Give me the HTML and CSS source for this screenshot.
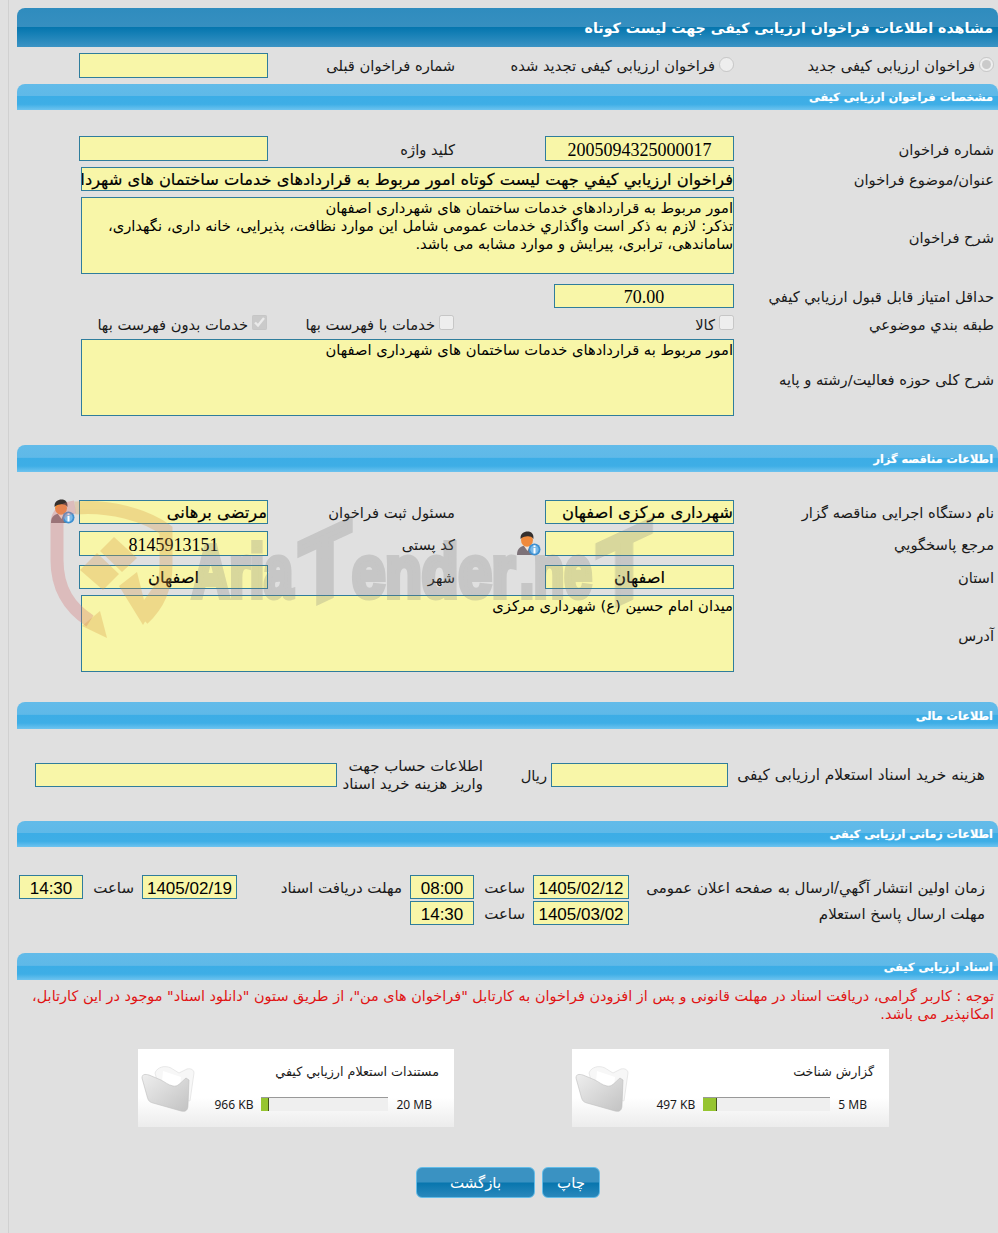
FILE: index.html
```html
<!DOCTYPE html>
<html lang="fa" dir="rtl">
<head>
<meta charset="utf-8">
<title>مشاهده اطلاعات فراخوان</title>
<link rel="stylesheet" href="styles.css">
</head>
<body>
<svg class="watermark" viewBox="0 0 998 700" aria-hidden="true">
  <path class="wm-pink" d="M75 507 C62 509 57 514 57 524 L57 560 C57 590 70 608 90 621"/>
  <g class="wm-orange-group">
    <polygon class="wm-orange" points="107,638 82,626 100,611"/>
    <path class="wm-orange-line" d="M75 508 C110 505 145 515 166 530 L166 565 C166 590 155 608 143 619"/>
    <polygon class="wm-orange" points="80,570 97,553 119,574 103,590"/>
    <polygon class="wm-orange" points="100,551 114,537 137,558 122,572"/>
    <polygon class="wm-orange" points="119,586 137,572 144,600 160,578 160,596 143,625"/>
  </g>
  <g class="wm-text-group">
    <text class="wm-text" x="192" y="597" font-size="74" textLength="101" lengthAdjust="spacingAndGlyphs" direction="ltr">Aria</text>
    <text class="wm-text" transform="translate(325 599) skewY(-25)" x="-26" y="0" font-size="98" textLength="52" lengthAdjust="spacingAndGlyphs" direction="ltr">T</text>
    <text class="wm-text" x="352" y="597" font-size="74" textLength="163" lengthAdjust="spacingAndGlyphs" direction="ltr">ender</text>
    <text class="wm-text" x="520" y="597" font-size="74" textLength="72" lengthAdjust="spacingAndGlyphs" direction="ltr">.ne</text>
    <text class="wm-text" transform="translate(624 601) skewY(-25)" x="-27" y="0" font-size="98" textLength="54" lengthAdjust="spacingAndGlyphs" direction="ltr">T</text>
  </g>
</svg>

<div class="page">
  <h1 class="bar bar-dark">مشاهده اطلاعات فراخوان ارزیابی کیفی جهت لیست کوتاه</h1>

  <div class="row h25 mt6">
    <label class="lab"><input type="radio" name="k" checked disabled>فراخوان ارزیابی کیفی جدید</label>
    <div class="radio-two">
      <label class="lab radio-cell"><input type="radio" name="k" disabled>فراخوان ارزیابی کیفی تجدید شده</label>
      <span class="lab radio-end">شماره فراخوان قبلی</span>
    </div>
    <div class="field"></div>
  </div>

  <h2 class="bar bar-light h26 mt6">مشخصات فراخوان ارزیابی کیفی</h2>

  <div class="row low h25 mt26">
    <span class="lab">شماره فراخوان</span>
    <div class="field center num">2005094325000017</div>
    <span class="lab lab-mid">کلید واژه</span>
    <div class="field"></div>
  </div>
  <div class="row h24 mt6">
    <span class="lab">عنوان/موضوع فراخوان</span>
    <div class="field wide strong nowrap">فراخوان ارزيابي كيفي جهت ليست كوتاه امور مربوط به قراردادهای خدمات ساختمان های شهرداری اصفهان</div>
  </div>
  <div class="row h77 mt6">
    <span class="lab">شرح فراخوان</span>
    <div class="field wide area">امور مربوط به قراردادهای خدمات ساختمان های شهرداری اصفهان<br>تذکر: لازم به ذکر است واگذاري خدمات عمومی شامل این موارد نظافت، پذیرایی، خانه داری، نگهداری،<br>ساماندهی، ترابری، پیرایش و موارد مشابه می باشد.</div>
  </div>
  <div class="row h24 mt10">
    <span class="lab">حداقل امتیاز قابل قبول ارزیابي کیفي</span>
    <div class="field center num score">70.00</div>
  </div>
  <div class="row h20 mt7">
    <span class="lab">طبقه بندي موضوعي</span>
    <div class="checks">
      <label class="lab check-a"><input type="checkbox" disabled>کالا</label>
      <label class="lab check-b"><input type="checkbox" disabled>خدمات با فهرست بها</label>
      <label class="lab"><input type="checkbox" checked disabled>خدمات بدون فهرست بها</label>
    </div>
  </div>
  <div class="row h77 mt4">
    <span class="lab">شرح کلی حوزه فعالیت/رشته و پایه</span>
    <div class="field wide area">امور مربوط به قراردادهای خدمات ساختمان های شهرداری اصفهان</div>
  </div>

  <h2 class="bar bar-light h27 mt29">اطلاعات مناقصه گزار</h2>

  <div class="row h24 mt28">
    <span class="lab">نام دستگاه اجرایی مناقصه گزار</span>
    <div class="field strong nowrap">شهرداری مرکزی اصفهان</div>
    <span class="lab lab-mid">مسئول ثبت فراخوان</span>
    <div class="field strong nowrap">مرتضی برهانی</div>
    <svg class="person person-end" viewBox="0 0 25 25" aria-hidden="true"><use href="#person"/></svg>
  </div>
  <div class="row low h25 mt7">
    <span class="lab">مرجع پاسخگويي</span>
    <div class="field"></div>
    <div class="mid-icon">
      <svg class="person" viewBox="0 0 25 25" aria-hidden="true"><use href="#person"/></svg>
      <span class="lab">کد پستی</span>
    </div>
    <div class="field center num">8145913151</div>
  </div>
  <div class="row h24 mt9">
    <span class="lab">استان</span>
    <div class="field center strong">اصفهان</div>
    <span class="lab lab-mid">شهر</span>
    <div class="field center strong">اصفهان</div>
  </div>
  <div class="row h77 mt6">
    <span class="lab">آدرس</span>
    <div class="field wide area">میدان امام حسین (ع) شهرداری مرکزی</div>
  </div>

  <h2 class="bar bar-light h27 mt30">اطلاعات مالی</h2>

  <div class="fin mt28">
    <span class="lab">هزینه خرید اسناد استعلام ارزیابی کیفی</span>
    <div class="field"></div>
    <span class="lab">ریال</span>
    <span class="lab fin-two">اطلاعات حساب جهت<br>واریز هزینه خرید اسناد</span>
    <div class="field"></div>
  </div>

  <h2 class="bar bar-light h26 mt28">اطلاعات زمانی ارزیابی کیفی</h2>

  <div class="times mt28">
    <span class="lab">زمان اولین انتشار آگهي/ارسال به صفحه اعلان عمومی</span>
    <div class="field center sans">1405/02/12</div>
    <span class="lab">ساعت</span>
    <div class="field center sans">08:00</div>
    <span class="lab">مهلت دریافت اسناد</span>
    <div class="field center sans">1405/02/19</div>
    <span class="lab">ساعت</span>
    <div class="field center sans">14:30</div>
  </div>
  <div class="times mt2">
    <span class="lab">مهلت ارسال پاسخ استعلام</span>
    <div class="field center sans">1405/03/02</div>
    <span class="lab">ساعت</span>
    <div class="field center sans">14:30</div>
  </div>

  <h2 class="bar bar-light h27 mt28">اسناد ارزیابی کیفی</h2>

  <p class="note">توجه : کاربر گرامی، دریافت اسناد در مهلت قانونی و پس از افزودن فراخوان به کارتابل "فراخوان های من"، از طریق ستون "دانلود اسناد" موجود در این کارتابل،<br>امکانپذیر می باشد.</p>

  <div class="cards">
    <div class="card">
      <svg class="folder" viewBox="0 0 54 48" aria-hidden="true"><use href="#folder"/></svg>
      <div class="card-title">گزارش شناخت</div>
      <div class="card-meter">
        <span>5 MB</span>
        <div class="meter"><i class="fill" style="width:14px"></i></div>
        <span>497 KB</span>
      </div>
    </div>
    <div class="card">
      <svg class="folder" viewBox="0 0 54 48" aria-hidden="true"><use href="#folder"/></svg>
      <div class="card-title">مستندات استعلام ارزيابي کيفي</div>
      <div class="card-meter">
        <span>20 MB</span>
        <div class="meter"><i class="fill" style="width:8px"></i></div>
        <span>966 KB</span>
      </div>
    </div>
  </div>

  <div class="buttons">
    <button class="btn btn-print" type="button">چاپ</button>
    <button class="btn btn-back" type="button">بازگشت</button>
  </div>
</div>

<svg class="defs" aria-hidden="true">
  <defs>
    <linearGradient id="fb" x1="0" y1="0" x2="1" y2="1"><stop offset="0" stop-color="#eeeeee"/><stop offset="1" stop-color="#c2c2c2"/></linearGradient>
    <symbol id="person" viewBox="0 0 25 25">
      <path d="M1 24 C1 17 5 14.500 11 14.500 C17 14.500 20 18 20 24 Z" fill="#7d7278"/>
      <path d="M8 15 L14 15 L11.500 20 Z" fill="#f3e6dc"/>
      <ellipse cx="11" cy="9" rx="6" ry="6.800" fill="#f08a3c"/>
      <path d="M4.600 8 C4 2.500 8 0.500 11.500 0.500 C15.500 0.500 18 3 17.400 8 C16 5.500 13 5 10 5.500 C7.500 5.800 6 6.500 4.600 8 Z" fill="#35302e"/>
      <circle cx="18.500" cy="18.500" r="6" fill="#3d8fd0"/>
      <circle cx="18.500" cy="18.500" r="4.200" fill="#7ab9e8"/>
      <rect x="17.500" y="17" width="2" height="5.500" fill="#fff"/>
      <rect x="17.500" y="14.300" width="2" height="1.800" fill="#fff"/>
    </symbol>
    <symbol id="folder" viewBox="0 0 54 48">
      <path d="M14 8 C16 2 24 0 30 3 L38 8 L46 4 C50 3 53 5 53 8 L49 36 L20 30 Z" fill="#f7f7f7" stroke="#dcdcdc" stroke-width=".6"/>
      <path d="M22 6 L40 12 L38 32 L20 28 Z" fill="#ffffff"/>
      <path d="M1 13 C1 9 4 9 8 10 L20 15 C24 17 27 20 32 21 C37 22 39 18 45 13 L48 15 L47 40 C47 46 44 47 40 46 L12 38 C8 37 7 35 6 31 Z" fill="url(#fb)" stroke="#bdbdbd" stroke-width=".6"/>
    </symbol>
  </defs>
</svg>
</body>
</html>
```

FILE: styles.css
```css
* { box-sizing: border-box; }
html, body { margin: 0; padding: 0; }
body {
  background: #e0e0e0;
  color: #1a1a1a;
  font-family: "DejaVu Sans", sans-serif;
  font-size: 14.7px;
  padding-left: 8px;
  overflow: hidden;
  height: 1233px;
}
.defs { position: absolute; width: 0; height: 0; }
.watermark { position: absolute; left: 0; top: 0; width: 998px; height: 700px; z-index: 5; pointer-events: none; }
.wm-text-group { opacity: .25; }
.wm-text { font-family: "Liberation Sans", sans-serif; font-weight: 700; fill: #787878; stroke: #787878; stroke-width: 6; }
.wm-pink { fill: none; stroke: #d37878; stroke-width: 13; opacity: .35; }
.wm-orange-group { opacity: .3; }
.wm-orange-line { fill: none; stroke: #d99a44; stroke-width: 13; }
.wm-orange { fill: #d99a44; }

.page {
  border-left: 1px solid #d0d0d0;
  padding: 8px 0 0 8px;
  height: 1233px;
}

.bar {
  margin: 0;
  color: #fff;
  font-weight: 700;
  display: flex;
  align-items: center;
  padding-right: 5px;
  border-radius: 8px 8px 0 0;
}
.bar-dark {
  height: 39px;
  font-size: 14.2px;
  background: linear-gradient(#2f8cbe 0, #368fc0 48%, #0676ae 50%, #0f7cb3 60%, #3b93c4 100%);
}
.bar-light {
  font-size: 11.3px;
  padding-top: 1px;
  background: linear-gradient(#62bbe9 0, #5fb9e8 46%, #3cade6 48%, #3eaee6 78%, #6dc3ef 100%);
  text-shadow: 0 0 1px rgba(255,255,255,.5);
}

.h20 { height: 20px; }
.h24 { height: 24px; }
.h25 { height: 25px; }
.h26 { height: 26px; }
.h27 { height: 27px; }
.h77 { height: 77px; }
.mt2 { margin-top: 2px; }
.mt4 { margin-top: 4px; }
.mt6 { margin-top: 6px; }
.mt7 { margin-top: 7px; }
.mt9 { margin-top: 9px; }
.mt10 { margin-top: 10px; }
.mt26 { margin-top: 26px; }
.mt28 { margin-top: 28px; }
.mt29 { margin-top: 29px; }
.mt30 { margin-top: 30px; }

.row {
  display: grid;
  grid-template-columns: 264px 189px 277px 189px 62px;
  align-items: center;
}
.row > .field { height: 100%; }
.h77 > .lab { margin-top: 4px; }
.low .lab { margin-top: 2px; }
.low .num { line-height: 27px; }
.h20 .lab { margin-top: -2px; }

.lab { padding-right: 4px; white-space: nowrap; display: flex; align-items: center; }
.lab input { margin: 0 0 3px 4px; width: 15px; height: 15px; }
.lab-mid { padding-right: 90px; }

.field {
  border: 1px solid #2f7d9c;
  background: #f8f6a8;
  color: #000;
  padding: 0;
  line-height: 22px;
  overflow: hidden;
}
.center { text-align: center; }
.num { font-family: "Liberation Serif", serif; font-size: 18px; line-height: 25px; }
.sans { font-family: "Liberation Sans", sans-serif; font-size: 17px; line-height: 25px; }
.strong { font-size: 16.3px; line-height: 24px; -webkit-text-stroke: .2px #000; }
.nowrap { white-space: nowrap; }
.wide { grid-column: 2 / 5; margin-left: 2px; }
.area { line-height: 18px; padding: 1px 0 0 0; }
.score { width: 180px; grid-column: 2; justify-self: start; }

.radio-two { display: flex; grid-column: 2 / 4; }
.radio-cell { width: 279px; padding-right: 0; }
.radio-end { padding-right: 0; }
.checks { grid-column: 2 / 5; display: flex; }
.check-a { width: 280px; padding-right: 0; }
.check-b { width: 187px; padding-right: 0; }
.checks .lab:last-child { padding-right: 0; }

.person { width: 25px; height: 25px; flex: none; }
.person-end { justify-self: start; margin-right: 4px; margin-top: -1px; }
.mid-icon { display: flex; align-items: center; padding-right: 4px; }
.mid-icon .lab { padding-right: 61px; }

.fin {
  display: grid;
  grid-template-columns: 270px 177px 68px 146px 302px;
  height: 36px;
  align-items: center;
}
.fin .lab:first-child { padding-right: 13px; font-size: 15.4px; }
.fin .field { height: 24px; }
.fin .fin-two { line-height: 18px; display: block; padding-right: 0; font-size: 15px; }

.times {
  display: grid;
  grid-template-columns: 369px 96px 59px 64px 173px 95px 59px 64px;
  height: 24px;
  align-items: center;
  font-size: 15px;
}
.times .field { height: 24px; }
.times .lab { padding-right: 8px; margin-top: 1px; }
.times .lab:first-child { padding-right: 13px; }

.note { margin: 7px 0 0; padding: 0 4px 0 0; height: 36px; color: #e01414; line-height: 18px; font-size: 14.44px; white-space: nowrap; }

.cards { display: flex; gap: 118px; padding-right: 109px; margin-top: 26px; }
.card {
  position: relative;
  width: 317px;
  height: 78px;
  background: linear-gradient(#ffffff 0, #ffffff 62%, #ececec 100%);
  font-size: 12px;
}
.card + .card { width: 316px; }
.folder { position: absolute; left: 3px; top: 16px; width: 54px; height: 48px; }
.card-title { padding: 14px 15px 0 0; height: 40px; font-size: 12.7px; line-height: 18px; }
.card-meter { display: flex; align-items: center; padding-right: 22px; gap: 8px; font-family: "Noto Sans", sans-serif; height: 30px; }
.card-meter span { direction: ltr; unicode-bidi: isolate; }
.meter { width: 127px; height: 14px; background: #efefef; border-top: 1px solid #999; display: flex; justify-content: flex-start; direction: ltr; }
.fill { display: block; height: 13px; background: #96c530; border-right: 1px solid #44551a; }

.buttons { display: flex; gap: 7px; padding-right: 398px; margin-top: 40px; }
.btn {
  height: 31px;
  border: 1px solid #63bce8;
  border-radius: 6px;
  color: #fff;
  font-family: "DejaVu Sans", sans-serif;
  font-size: 15px;
  background: linear-gradient(#3a92c2 0, #3a92c2 48%, #0876ae 52%, #2a88bc 100%);
  padding: 0;
}
.btn-print { width: 58px; }
.btn-back { width: 119px; }
```
